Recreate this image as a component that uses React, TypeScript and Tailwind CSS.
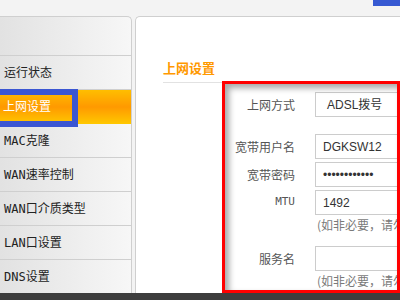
import React from 'react';

const menu = ['运行状态', '上网设置', 'MAC克隆', 'WAN速率控制', 'WAN口介质类型', 'LAN口设置', 'DNS设置'];

const cjk = { fontFamily: '"Noto Sans CJK SC", sans-serif' };
const pixel = { fontFamily: '"DejaVu Sans Mono", "Noto Sans CJK SC", monospace' };
const field = { fontFamily: '"Liberation Sans", "Noto Sans CJK SC", sans-serif' };

const Row: React.FC<{ label: string; value?: string; mono?: boolean; className?: string; pad?: string }> = ({
  label,
  value,
  mono,
  className = '',
  pad = 'pl-[7px]',
}) => (
  <div className={`flex items-center h-[25px] ${className}`}>
    <span
      className={`w-[159px] shrink-0 text-right text-[#555] ${mono ? 'text-[11px]' : 'text-[12px]'}`}
      style={mono ? pixel : cjk}
    >
      {label}
    </span>
    <div
      className={`ml-[20px] w-[140px] h-[25px] shrink-0 border border-[#cccccc] bg-white flex items-center ${pad} text-[12px] text-[#333]`}
      style={field}
    >
      {value}
    </div>
  </div>
);

const Hint: React.FC<{ className?: string }> = ({ className = '' }) => (
  <div className={`h-[18px] pl-[181px] text-[12px] leading-[18px] text-[#7a7a7a] whitespace-nowrap ${className}`} style={cjk}>
    (如非必要，请勿修改)
  </div>
);

export default function App() {
  return (
    <div className="relative w-[400px] h-[300px] overflow-hidden bg-[#f3f3f3] flex flex-col">
      {/* blue mark at the top right */}
      <div className="absolute top-0 right-0 w-[27px] h-[6px] bg-[#3659d2]" />

      <div className="h-[16px] shrink-0" />

      <div className="flex h-[277px] shrink-0">
        {/* sidebar */}
        <div className="w-[132px] shrink-0 border-t border-r border-[#cfcfcf] rounded-tr-[5px] bg-gradient-to-r from-[#e2e2e2] to-[#f7f7f7] flex flex-col">
          <div className="h-[39px] shrink-0 border-b border-[#cfcfcf]" />
          {menu.map((item) =>
            item === '上网设置' ? (
              <div
                key={item}
                className="relative h-[34px] shrink-0 flex items-center pl-[3px] bg-gradient-to-b from-[#ffbe00] via-[#ff9900] to-[#ffc800] text-white text-[12px]"
                style={pixel}
              >
                {item}
                <div className="absolute left-0 top-[-1px] w-[78px] h-[38px] border-[6px] border-l-0 border-[#3b56d2]" />
              </div>
            ) : (
              <div
                key={item}
                className="h-[34px] shrink-0 flex items-center pl-[4px] border-b border-[#cfcfcf] text-[#222] text-[12px]"
                style={pixel}
              >
                {item}
              </div>
            )
          )}
        </div>

        {/* main panel */}
        <div className="relative ml-[3px] flex-1 border-t border-l border-[#cfcfcf] rounded-tl-[5px] bg-white overflow-hidden">
          <div className="pt-[43px] pl-[27px]">
            <div className="w-[260px] pb-[6px] border-b border-[#e2e2e2] text-[13px] leading-[16px] font-bold text-[#ff9900]" style={cjk}>
              上网设置
            </div>
          </div>

          <div className="flex flex-col">
            <Row label="上网方式" value="ADSL拨号" className="mt-[9px]" pad="pl-[11px]" />
            <Row label="宽带用户名" value="DGKSW12" className="mt-[17px]" />
            <Row label="宽带密码" value="••••••••••••" className="mt-[3px]" />
            <Row label="MTU" value="1492" mono className="mt-[3px]" />
            <Hint className="mt-[1px]" />
            <Row label="服务名" className="mt-[12px]" />
            <Hint className="mt-[1px]" />
          </div>

          {/* red highlight frame */}
          <div className="pointer-events-none absolute left-[86px] top-[64px] w-[178px] h-[212px] border-[3px] border-[#ff0000] shadow-[inset_4px_4px_6px_rgba(0,0,0,0.35)]" />
        </div>
      </div>

      <div className="flex-1 bg-[#3d3d3d]" />
    </div>
  );
}
